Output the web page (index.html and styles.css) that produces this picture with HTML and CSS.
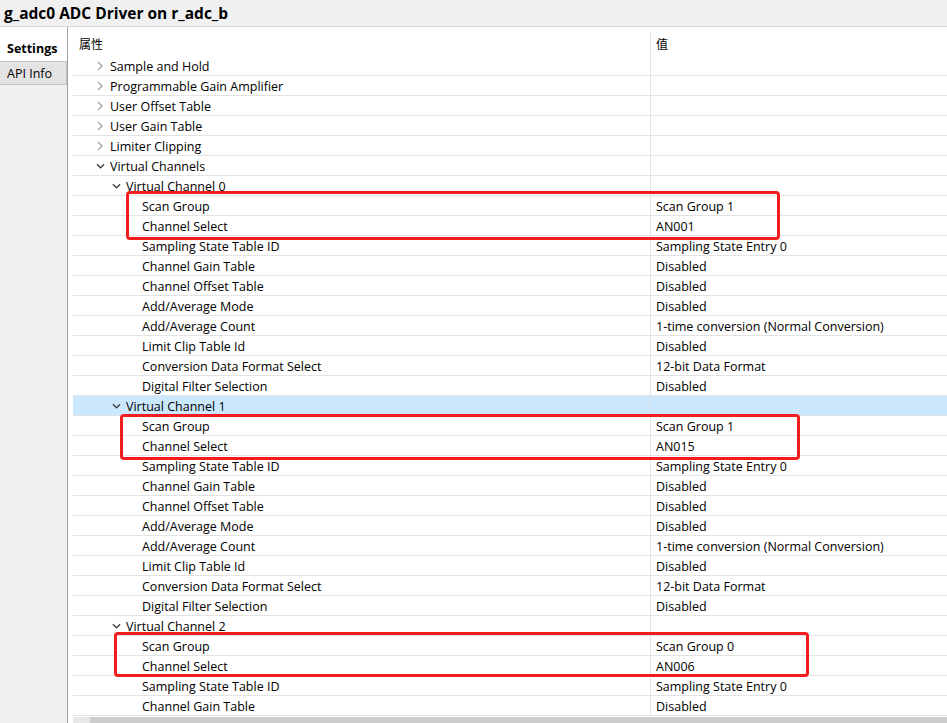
FILE: index.html
```html
<!DOCTYPE html>
<html lang="en">
<head>
<meta charset="utf-8">
<title>g_adc0 ADC Driver on r_adc_b</title>
<link rel="stylesheet" href="styles.css">
</head>
<body>
<div class="page">
  <div class="titlebar">g_adc0 ADC Driver on r_adc_b</div>
  <div class="main">
    <div class="sidebar">
      <div class="tab tab-active">Settings</div>
      <div class="tab">API Info</div>
    </div>
    <div class="content">
      <div class="header">
        <div class="h-name">属性</div>
        <div class="h-value">值</div>
      </div>
      <div class="rows">
        <div class="row"><div class="name l0"><span class="tw"><svg class="chev-r" viewBox="0 0 6 10"><path d="M1 1 L5 5 L1 9"/></svg></span>Sample and Hold</div><div class="value"></div></div>
        <div class="row"><div class="name l0"><span class="tw"><svg class="chev-r" viewBox="0 0 6 10"><path d="M1 1 L5 5 L1 9"/></svg></span>Programmable Gain Amplifier</div><div class="value"></div></div>
        <div class="row"><div class="name l0"><span class="tw"><svg class="chev-r" viewBox="0 0 6 10"><path d="M1 1 L5 5 L1 9"/></svg></span>User Offset Table</div><div class="value"></div></div>
        <div class="row"><div class="name l0"><span class="tw"><svg class="chev-r" viewBox="0 0 6 10"><path d="M1 1 L5 5 L1 9"/></svg></span>User Gain Table</div><div class="value"></div></div>
        <div class="row"><div class="name l0"><span class="tw"><svg class="chev-r" viewBox="0 0 6 10"><path d="M1 1 L5 5 L1 9"/></svg></span>Limiter Clipping</div><div class="value"></div></div>
        <div class="row"><div class="name l0"><span class="tw"><svg class="chev-d" viewBox="0 0 10 6"><path d="M1 1 L5 5 L9 1"/></svg></span>Virtual Channels</div><div class="value"></div></div>

        <div class="row"><div class="name l1"><span class="tw"><svg class="chev-d" viewBox="0 0 10 6"><path d="M1 1 L5 5 L9 1"/></svg></span>Virtual Channel 0</div><div class="value"></div></div>
        <div class="row"><div class="name l2">Scan Group</div><div class="value">Scan Group 1</div></div>
        <div class="row"><div class="name l2">Channel Select</div><div class="value">AN001</div></div>
        <div class="row"><div class="name l2">Sampling State Table ID</div><div class="value">Sampling State Entry 0</div></div>
        <div class="row"><div class="name l2">Channel Gain Table</div><div class="value">Disabled</div></div>
        <div class="row"><div class="name l2">Channel Offset Table</div><div class="value">Disabled</div></div>
        <div class="row"><div class="name l2">Add/Average Mode</div><div class="value">Disabled</div></div>
        <div class="row"><div class="name l2">Add/Average Count</div><div class="value">1-time conversion (Normal Conversion)</div></div>
        <div class="row"><div class="name l2">Limit Clip Table Id</div><div class="value">Disabled</div></div>
        <div class="row"><div class="name l2">Conversion Data Format Select</div><div class="value">12-bit Data Format</div></div>
        <div class="row"><div class="name l2">Digital Filter Selection</div><div class="value">Disabled</div></div>

        <div class="row selected"><div class="name l1"><span class="tw"><svg class="chev-d" viewBox="0 0 10 6"><path d="M1 1 L5 5 L9 1"/></svg></span>Virtual Channel 1</div><div class="value"></div></div>
        <div class="row"><div class="name l2">Scan Group</div><div class="value">Scan Group 1</div></div>
        <div class="row"><div class="name l2">Channel Select</div><div class="value">AN015</div></div>
        <div class="row"><div class="name l2">Sampling State Table ID</div><div class="value">Sampling State Entry 0</div></div>
        <div class="row"><div class="name l2">Channel Gain Table</div><div class="value">Disabled</div></div>
        <div class="row"><div class="name l2">Channel Offset Table</div><div class="value">Disabled</div></div>
        <div class="row"><div class="name l2">Add/Average Mode</div><div class="value">Disabled</div></div>
        <div class="row"><div class="name l2">Add/Average Count</div><div class="value">1-time conversion (Normal Conversion)</div></div>
        <div class="row"><div class="name l2">Limit Clip Table Id</div><div class="value">Disabled</div></div>
        <div class="row"><div class="name l2">Conversion Data Format Select</div><div class="value">12-bit Data Format</div></div>
        <div class="row"><div class="name l2">Digital Filter Selection</div><div class="value">Disabled</div></div>

        <div class="row"><div class="name l1"><span class="tw"><svg class="chev-d" viewBox="0 0 10 6"><path d="M1 1 L5 5 L9 1"/></svg></span>Virtual Channel 2</div><div class="value"></div></div>
        <div class="row"><div class="name l2">Scan Group</div><div class="value">Scan Group 0</div></div>
        <div class="row"><div class="name l2">Channel Select</div><div class="value">AN006</div></div>
        <div class="row"><div class="name l2">Sampling State Table ID</div><div class="value">Sampling State Entry 0</div></div>
        <div class="row"><div class="name l2">Channel Gain Table</div><div class="value">Disabled</div></div>
      </div>
      <div class="hscroll"><div class="hscroll-thumb"></div></div>
    </div>
  </div>
  <div class="mark mark-0"></div>
  <div class="mark mark-1"></div>
  <div class="mark mark-2"></div>
</div>
</body>
</html>
```

FILE: styles.css
```css
html, body {
  margin: 0;
  padding: 0;
  background: #ffffff;
}

.page {
  position: relative;
  width: 947px;
  height: 723px;
  overflow: hidden;
  font-family: "Open Sans", "Noto Sans", "Noto Sans CJK SC", sans-serif;
  font-size: 12.5px;
  color: #000000;
}

.titlebar {
  height: 27px;
  line-height: 27px;
  box-sizing: border-box;
  padding-left: 4px;
  background: #f0f0f0;
  border-bottom: 1px solid #d7d7d7;
  font-size: 15.5px;
  font-weight: 700;
  color: #000000;
}

.main {
  display: flex;
  height: 696px;
}

.sidebar {
  width: 67px;
  flex: none;
  background: #f0f0f0;
  border-right: 1px solid #a0a0a0;
  display: flex;
  flex-direction: column;
  padding-top: 9px;
  position: relative;
}

.sidebar::before {
  content: "";
  position: absolute;
  left: 0;
  right: 0;
  top: 0;
  height: 9px;
  background: #ffffff;
}

.tab {
  height: 24px;
  line-height: 23px;
  padding-left: 7px;
  box-sizing: border-box;
  background: #e3e3e3;
  border: 1px solid #c4c4c4;
  border-left: none;
  font-size: 12.5px;
}

.tab-active {
  height: 25px;
  background: #ffffff;
  border: none;
  font-weight: 700;
  line-height: 26px;
}

.content {
  flex: 1;
  padding-left: 5px;
  display: flex;
  flex-direction: column;
  min-width: 0;
}

.header {
  display: flex;
  height: 29px;
  flex: none;
}

.h-name {
  width: 577px;
  flex: none;
  padding-left: 6px;
  padding-top: 8px;
  box-sizing: border-box;
  font-size: 12px;
  font-family: "Noto Sans CJK SC", sans-serif;
}

.h-value {
  flex: 1;
  margin-top: 5px;
  border-left: 1px solid #e3e3e3;
  padding-left: 5px;
  padding-top: 3px;
  font-size: 12px;
  font-family: "Noto Sans CJK SC", sans-serif;
}

.rows {
  display: flex;
  flex-direction: column;
  flex: none;
}

.row {
  display: flex;
  height: 20px;
  box-sizing: border-box;
  border-bottom: 1px solid #e3e3e3;
  line-height: 19px;
}

.row.selected {
  background: #cce8ff;
}

.name {
  width: 577px;
  flex: none;
  display: flex;
  align-items: center;
  white-space: nowrap;
  box-sizing: border-box;
  padding-top: 1px;
}

.l0 { padding-left: 21px; }
.l1 { padding-left: 37px; }
.l2 { padding-left: 69px; }

.tw {
  width: 16px;
  height: 19px;
  display: flex;
  align-items: center;
  justify-content: center;
  flex: none;
}

.chev-r {
  width: 6px;
  height: 10px;
  margin-right: 5px;
}

.chev-r path {
  fill: none;
  stroke: #a6a6a6;
  stroke-width: 1.4;
}

.chev-d {
  width: 9px;
  height: 6px;
  margin-right: 3px;
}

.chev-d path {
  fill: none;
  stroke: #404040;
  stroke-width: 1.5;
}

.value {
  flex: 1;
  border-left: 1px solid #e3e3e3;
  padding-left: 5px;
  padding-top: 1px;
  white-space: nowrap;
}

.hscroll {
  margin-top: 1px;
  height: 6px;
  background: #e8e8e8;
  display: flex;
  padding-left: 17px;
}

.hscroll-thumb {
  flex: 1;
  background: #cdcdcd;
}

.mark {
  position: absolute;
  border: 3px solid #f41c1c;
  border-radius: 4px;
  box-sizing: border-box;
}

.mark-0 { left: 126px; top: 191px; width: 654px; height: 49px; }
.mark-1 { left: 120px; top: 414px; width: 680px; height: 46px; }
.mark-2 { left: 114px; top: 632px; width: 695px; height: 45px; }
```
